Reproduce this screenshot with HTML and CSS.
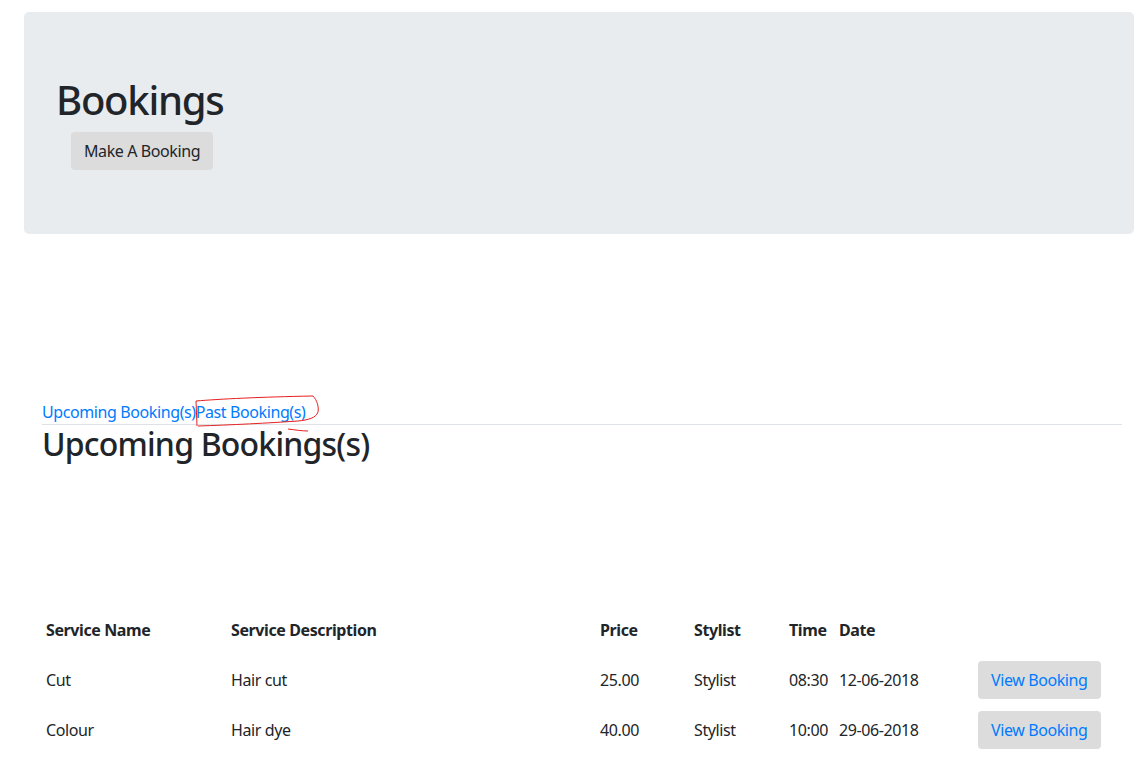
FILE: index.html
```html
<!DOCTYPE html>
<html>
<head>
<meta charset="utf-8">
<link rel="stylesheet" href="styles.css">
</head>
<body>
<div class="jumbotron">
  <h1 class="title">Bookings</h1>
  <button class="btn btn-grey">Make A Booking</button>
</div>
<div class="content">
  <nav class="tabs">
    <a href="#">Upcoming Booking(s)</a><a href="#">Past Booking(s)</a>
    <svg class="scribble" width="135" height="42" viewBox="0 0 135 42">
      <path d="M7 34 L6 9 C30 7 70 5 123 4 C127 8 129 15 128 20 C126 26 118 28 108 29 C80 31 40 33 8 34 M98 37 C106 38 112 39 118 39" fill="none" stroke="#e52020" stroke-width="1"/>
    </svg>
  </nav>
  <h2 class="subtitle">Upcoming Bookings(s)</h2>
  <table class="bookings">
    <colgroup>
      <col class="c1"><col class="c2"><col class="c3"><col class="c4"><col class="c5"><col class="c6"><col class="c7">
    </colgroup>
    <thead>
      <tr><th>Service Name</th><th>Service Description</th><th>Price</th><th>Stylist</th><th>Time</th><th>Date</th><th></th></tr>
    </thead>
    <tbody>
      <tr><td>Cut</td><td>Hair cut</td><td>25.00</td><td>Stylist</td><td>08:30</td><td>12-06-2018</td><td class="act"><button class="btn btn-grey btn-link">View Booking</button></td></tr>
      <tr><td>Colour</td><td>Hair dye</td><td>40.00</td><td>Stylist</td><td>10:00</td><td>29-06-2018</td><td class="act"><button class="btn btn-grey btn-link">View Booking</button></td></tr>
    </tbody>
  </table>
</div>
</body>
</html>
```

FILE: styles.css
```css
html, body {
  margin: 0;
  padding: 0;
  background: #fff;
}
body {
  font-family: "Noto Sans", "Open Sans", sans-serif;
  font-size: 16px;
  line-height: 1.5;
  color: #212529;
  letter-spacing: -0.025em;
}
.jumbotron {
  background: #e9ecef;
  border-radius: 5px;
  padding: 64px 32px;
  margin: 12px 11px 0 24px;
}
.title {
  font-size: 40px;
  font-weight: 500;
  line-height: 48px;
  letter-spacing: -1.25px;
  margin: 0 0 8px 0;
}
.btn {
  font-family: inherit;
  font-size: 16px;
  line-height: 24px;
  letter-spacing: inherit;
  padding: 7px 13px;
  border: 0;
  border-radius: 4px;
  cursor: pointer;
}
.btn-grey {
  background: #dcdcdc;
  color: #212529;
}
.jumbotron .btn {
  margin-left: 15px;
}
.btn-link {
  color: #007bff;
}
.content {
  margin: 166px 23px 0 42px;
}
.tabs {
  position: relative;
  display: flex;
  border-bottom: 1px solid #dee2e6;
}
.tabs a {
  color: #007bff;
  text-decoration: none;
  line-height: 24px;
}
.scribble {
  position: absolute;
  left: 148px;
  top: -8px;
}
.subtitle {
  font-size: 32px;
  font-weight: 500;
  line-height: 38px;
  letter-spacing: -0.8px;
  margin: 0;
}
.bookings {
  margin-top: 142px;
  width: 100%;
  border-collapse: collapse;
  table-layout: fixed;
}
.c1 { width: 185px; }
.c2 { width: 369px; }
.c3 { width: 94px; }
.c4 { width: 95px; }
.c5 { width: 50px; }
.c6 { width: 139px; }
.bookings th, .bookings td {
  text-align: left;
  padding: 13px 4px;
  line-height: 24px;
  vertical-align: middle;
  white-space: nowrap;
}
.bookings th {
  font-weight: 700;
}
.bookings td.act {
  padding: 6px 4px;
}
```
